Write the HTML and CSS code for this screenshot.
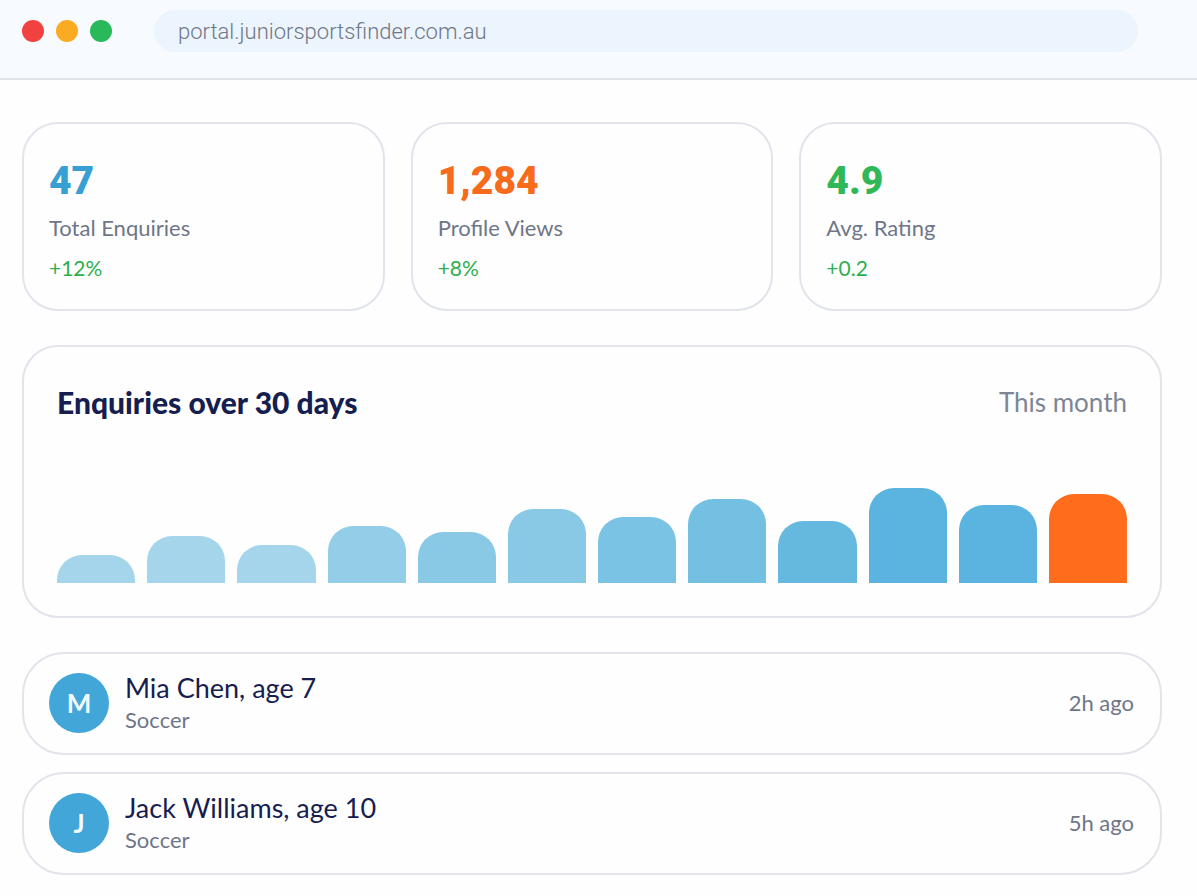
FILE: index.html
```html
<!DOCTYPE html>
<html lang="en">
<head>
    <meta charset="UTF-8">
    <meta name="viewport" content="width=device-width, initial-scale=1.0">
    <title>Junior Sports Finder Portal</title>

    <link rel="stylesheet" href="styles.css">
</head>
<body>
    <header class="browser-bar">
        <div class="dots">
            <span class="dot red"></span>
            <span class="dot yellow"></span>
            <span class="dot green"></span>
        </div>
        <input class="address" type="text" aria-label="Address" value="portal.juniorsportsfinder.com.au">
    </header>

    <main class="content">
        <section class="stats">
            <div class="card stat">
                <div class="stat-value blue-text">47</div>
                <div class="stat-label">Total Enquiries</div>
                <div class="stat-change">+12%</div>
            </div>
            <div class="card stat">
                <div class="stat-value orange-text">1,284</div>
                <div class="stat-label">Profile Views</div>
                <div class="stat-change">+8%</div>
            </div>
            <div class="card stat">
                <div class="stat-value green-text">4.9</div>
                <div class="stat-label">Avg. Rating</div>
                <div class="stat-change">+0.2</div>
            </div>
        </section>

        <section class="card chart">
            <div class="chart-header">
                <h2>Enquiries over 30 days</h2>
                <span class="period">This month</span>
            </div>
            <div class="bars">
                <div class="bar shade-1" style="height: 28px"></div>
                <div class="bar shade-1" style="height: 47px"></div>
                <div class="bar shade-1" style="height: 38px"></div>
                <div class="bar shade-2" style="height: 57px"></div>
                <div class="bar shade-3" style="height: 51px"></div>
                <div class="bar shade-3" style="height: 74px"></div>
                <div class="bar shade-4" style="height: 66px"></div>
                <div class="bar shade-5" style="height: 84px"></div>
                <div class="bar shade-6" style="height: 62px"></div>
                <div class="bar shade-7" style="height: 95px"></div>
                <div class="bar shade-7" style="height: 78px"></div>
                <div class="bar current" style="height: 89px"></div>
            </div>
        </section>

        <section class="enquiries">
            <div class="card enquiry">
                <div class="avatar">M</div>
                <div class="person">
                    <div class="name">Mia Chen, age 7</div>
                    <div class="sport">Soccer</div>
                </div>
                <div class="time">2h ago</div>
            </div>
            <div class="card enquiry">
                <div class="avatar">J</div>
                <div class="person">
                    <div class="name">Jack Williams, age 10</div>
                    <div class="sport">Soccer</div>
                </div>
                <div class="time">5h ago</div>
            </div>
        </section>
    </main>
</body>
</html>
```

FILE: styles.css
```css
* {
    box-sizing: border-box;
}

body {
    font-family: Lato, "Open Sans", sans-serif;
    background-color: #fefefe;
    color: #6e7687;
    margin: 0;
}

/* Browser bar */
.browser-bar {
    display: flex;
    align-items: center;
    gap: 42px;
    padding: 10px 59px 26px 22px;
    background-color: #f7faff;
    border-bottom: 2px solid #dfe3ea;
}

.dots {
    display: flex;
    gap: 12px;
}

.dot {
    width: 22px;
    height: 22px;
    border-radius: 50%;
}

.red {
    background-color: #f2423f;
}

.yellow {
    background-color: #fbab21;
}

.green {
    background-color: #2ab95a;
}

.address {
    flex: 1;
    min-width: 0;
    height: 42px;
    padding: 0 24px;
    border: none;
    border-radius: 21px;
    background-color: #ecf4fd;
    color: #6e7687;
    font-family: Roboto, sans-serif;
    font-size: 22px;
    font-weight: 300;
}

/* Page content */
.content {
    display: flex;
    flex-direction: column;
    gap: 34px;
    padding: 42px 35px 20px 22px;
}

.card {
    background-color: #fefefe;
    border: 2px solid #e1e4eb;
    border-radius: 36px;
}

/* Stat cards */
.stats {
    display: grid;
    grid-template-columns: repeat(3, 1fr);
    gap: 26px;
}

.stat {
    padding: 30px 25px 21px;
}

.stat-value {
    font-family: Roboto, sans-serif;
    font-size: 39px;
    font-weight: 900;
    line-height: 54px;
}

.blue-text {
    color: #389fd5;
}

.orange-text {
    color: #f66b1c;
}

.green-text {
    color: #30b858;
}

.stat-label,
.stat-change {
    font-size: 22px;
    line-height: 40px;
}

.stat-change {
    color: #2fae50;
    font-size: 21px;
}

/* Bar chart */
.chart {
    padding: 33px;
}

.chart-header {
    display: flex;
    justify-content: space-between;
    align-items: center;
    line-height: 44px;
}

.chart-header h2 {
    margin: 0;
    color: #161d4f;
    font-size: 30px;
    font-weight: 900;
}

.period {
    color: #7d8594;
    font-size: 26px;
}

.bars {
    display: flex;
    align-items: flex-end;
    gap: 12px;
    height: 159px;
}

.bar {
    flex: 1;
    border-radius: 25px 25px 0 0;
}

.shade-1 {
    background-color: #a5d5ea;
}

.shade-2 {
    background-color: #94cde8;
}

.shade-3 {
    background-color: #89c9e6;
}

.shade-4 {
    background-color: #7bc3e4;
}

.shade-5 {
    background-color: #73c0e2;
}

.shade-6 {
    background-color: #65b9df;
}

.shade-7 {
    background-color: #5ab4df;
}

.current {
    background-color: #ff6c1c;
}

/* Latest enquiries */
.enquiries {
    display: flex;
    flex-direction: column;
    gap: 17px;
}

.enquiry {
    display: flex;
    align-items: center;
    gap: 16px;
    padding: 17px 26px 19px 25px;
    border-radius: 42px;
}

.avatar {
    width: 60px;
    height: 60px;
    border-radius: 50%;
    background-color: #42a6d8;
    color: #f2fbff;
    font-size: 26px;
    font-weight: 700;
    line-height: 60px;
    text-align: center;
}

.person {
    flex: 1;
}

.name {
    color: #161d4f;
    font-size: 27px;
    line-height: 34px;
}

.sport {
    font-size: 22px;
    line-height: 29px;
}

.time {
    font-size: 22px;
}
```
